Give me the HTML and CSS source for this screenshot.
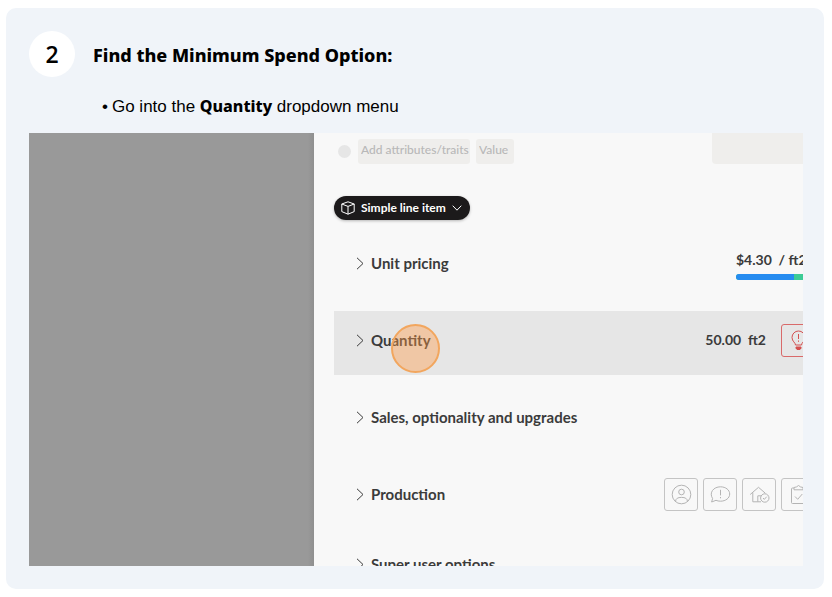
FILE: index.html
```html
<!DOCTYPE html>
<html lang="en">
<head>
<meta charset="utf-8">
<title>Find the Minimum Spend Option</title>
<meta name="viewport" content="width=device-width, initial-scale=1">
<link rel="stylesheet" href="styles.css">
</head>
<body>
<main class="step">
  <header class="step-head">
    <span class="step-number">2</span>
    <h2 class="step-title">Find the Minimum Spend Option:</h2>
  </header>
  <ul class="step-notes">
    <li>Go into the <strong>Quantity</strong> dropdown menu</li>
  </ul>
  <section class="shot">
    <div class="backdrop"></div>
    <div class="panel">
      <div class="attributes">
        <span class="dot"></span>
        <input class="field field-name" type="text" placeholder="Add attributes/traits" aria-label="Attribute name">
        <input class="field field-value" type="text" placeholder="Value" aria-label="Attribute value">
        <div class="field-blank"></div>
      </div>
      <button class="type-pill" type="button">
        <svg width="14" height="14" viewBox="0 0 14 14"><path d="M7 .8 13.2 3v7.6L7 13.2.8 10.600V3zM.8 3 7 5.400 13.200 3M7 5.400v7.800"/></svg>
        <span>Simple line item</span>
        <svg width="10" height="6" viewBox="0 0 10 6"><path d="M.7.7 5 5.200 9.300.7"/></svg>
      </button>
      <div class="rows">
        <div class="row">
          <button class="toggle" type="button"><svg class="chevron" width="8" height="13" viewBox="0 0 8 13"><path d="M1 .8 7 6.500 1 12.200"/></svg>Unit pricing</button>
          <div class="price">
            <span>$4.30 &nbsp;/ ft2</span>
            <div class="bar"><div class="bar-cost"></div></div>
          </div>
        </div>
        <div class="row row-active">
          <button class="toggle" type="button"><svg class="chevron" width="8" height="13" viewBox="0 0 8 13"><path d="M1 .8 7 6.500 1 12.200"/></svg>Quantity</button>
          <span class="amount">50.00 &nbsp;ft2</span>
          <button class="tool tool-alert" type="button" aria-label="Quantity hint">
            <svg width="21" height="21" viewBox="0 0 21 21"><path d="M7.500 15C7.500 12.500 4 11.500 4 7.500a6.500 6.500 0 0 1 13 0c0 4-3.500 5-3.500 7.500zM10.500 4v5M10.500 10.500v1.300"/><path d="M8 17h5v1.200l-1 1.300H9l-1-1.300z" fill="currentColor"/></svg>
          </button>
          <span class="click-mark"></span>
        </div>
        <div class="row">
          <button class="toggle" type="button"><svg class="chevron" width="8" height="13" viewBox="0 0 8 13"><path d="M1 .8 7 6.500 1 12.200"/></svg>Sales, optionality and upgrades</button>
        </div>
        <div class="row">
          <button class="toggle" type="button"><svg class="chevron" width="8" height="13" viewBox="0 0 8 13"><path d="M1 .8 7 6.500 1 12.200"/></svg>Production</button>
          <div class="tools">
            <button class="tool" type="button" aria-label="Assignee">
              <svg width="21" height="21" viewBox="0 0 21 21"><circle cx="10.500" cy="10.500" r="9.300"/><circle cx="10.500" cy="8" r="2.800"/><path d="M4.500 17.400c.3-3 2.300-4 6-4s5.700 1 6 4"/></svg>
            </button>
            <button class="tool" type="button" aria-label="Comment">
              <svg width="21" height="21" viewBox="0 0 21 21"><path d="M2.600 14.600C-1.200 8.500 3.600 2.800 10.500 2.800c5.200 0 9.200 3.200 9.200 7.200s-4 7.200-9.200 7.200c-1.700 0-3.200-.3-4.500-.9L1.600 18zM10.500 5.800v5.600M10.500 13v1.300"/></svg>
            </button>
            <button class="tool" type="button" aria-label="Site check">
              <svg width="21" height="21" viewBox="0 0 21 21"><path d="M1.200 10.500 9.500 3.300l6.800 5.900M3.800 8.500v9.300h5v-6h4M8.800 17.800h3.200"/><circle cx="15.800" cy="14" r="4.200"/><path d="m14 14 1.300 1.400 2.400-2.700"/></svg>
            </button>
            <button class="tool" type="button" aria-label="Checklist">
              <svg width="21" height="21" viewBox="0 0 21 21"><path d="M6 4H4.500Q3.500 4 3.500 5v13.500q0 1 1 1h12q1 0 1-1V5q0-1-1-1H15M6 5.800V3.500l2.500-.6q2-2.800 4 0l2.500.6v2.300zM7 12.500l2.700 2.800 4.600-5.300"/></svg>
            </button>
          </div>
        </div>
        <div class="row row-last">
          <button class="toggle" type="button"><svg class="chevron" width="8" height="13" viewBox="0 0 8 13"><path d="M1 .8 7 6.500 1 12.200"/></svg>Super user options</button>
        </div>
      </div>
    </div>
  </section>
</main>
</body>
</html>
```
FILE: styles.css
```css
* {
  box-sizing: border-box;
}

body {
  margin: 8px 8px 8px 6px;
  background: #fff;
  color: #000;
  font-family: "Liberation Sans", Arial, sans-serif;
}

button,
input {
  margin: 0;
  border: 0;
  font: inherit;
  color: inherit;
}

svg {
  display: block;
  flex: none;
  fill: none;
  stroke: currentColor;
  stroke-width: 1;
}

.step {
  padding: 23px 21px 23px 23px;
  border-radius: 10px;
  background: #f0f4f9;
}

.step-head {
  display: flex;
  align-items: center;
  gap: 18px;
}

.step-number {
  display: grid;
  place-items: center;
  width: 46px;
  height: 46px;
  border-radius: 50%;
  background: #fff;
  font: 600 23px/46px "Open Sans", sans-serif;
}

.step-title {
  margin: 0;
  padding-top: 2px;
  font: 800 18px/28px "Noto Sans", sans-serif;
}

.step-notes {
  margin: 16px 0 14px;
  padding: 0 0 0 73px;
  list-style: none;
  font-size: 17px;
  line-height: 26px;
}

.step-notes li {
  height: 26px;
}

.step-notes li::before {
  content: "•";
  margin-right: 4px;
}

.step-notes strong {
  font: 800 16px/26px "Noto Sans", sans-serif;
}

.shot {
  display: grid;
  grid-template-columns: 285px minmax(0, 1fr);
  aspect-ratio: 774 / 433;
  overflow: hidden;
  background: #f8f8f8;
  color: #3b3b3b;
  font: 700 15px/20px Lato, sans-serif;
}

.backdrop {
  background: linear-gradient(to left, #8f8f8f, #999 6px);
}

.panel {
  min-height: 0;
  margin-right: -12px;
  padding-left: 20px;
}

.attributes {
  display: flex;
  align-items: flex-end;
  gap: 6px;
  height: 31px;
}

.dot {
  width: 13px;
  height: 13px;
  margin: 0 1px 6px 4px;
  border-radius: 50%;
  background: #e6e6e6;
}

.field {
  height: 25px;
  padding: 0 0 4px 3px;
  border-radius: 3px;
  background: #efeeec;
  font-size: 12px;
  font-weight: 500;
}

.field::placeholder {
  color: #b8b8b8;
  opacity: 1;
}

.field-name {
  width: 112px;
}

.field-value {
  width: 38px;
}

.field-blank {
  align-self: stretch;
  width: 103px;
  margin-left: auto;
  border-radius: 0 0 4px 4px;
  background: #efeeec;
}

.type-pill {
  display: flex;
  align-items: center;
  gap: 6px;
  height: 24px;
  margin-top: 32px;
  padding: 0 8px 0 7px;
  border-radius: 12px;
  background: #1c1a1b;
  box-shadow: 0 1px 3px #0004;
  color: #fff;
  font-size: 12px;
}

.rows {
  display: grid;
  gap: 13px;
  margin-top: 14px;
}

.row {
  position: relative;
  display: flex;
  align-items: center;
  height: 64px;
  padding: 0 0 6px 22px;
}

.row-active {
  background: #e6e6e6;
}

.row-last {
  height: 50px;
}

.toggle {
  display: flex;
  align-items: center;
  gap: 7px;
  margin-right: auto;
  padding: 0;
  background: none;
}

.price {
  display: grid;
  gap: 4px;
  width: 79px;
  padding-top: 3px;
  font-size: 14px;
  white-space: nowrap;
}

.bar {
  height: 6px;
  border-radius: 3px;
  overflow: hidden;
  background: #3ccb96;
}

.bar-cost {
  width: 74%;
  height: 100%;
  background: #268cf0;
}

.amount {
  margin-right: 15px;
  font-size: 14px;
}

.tools {
  display: flex;
  gap: 5px;
}

.tool {
  display: grid;
  place-items: center;
  width: 34px;
  height: 33px;
  padding: 0;
  border: 1px solid #c4c4c4;
  border-radius: 3px;
  background: none;
  color: #b4b4b4;
}

.tool-alert {
  border-color: #d96a6a;
  color: #d45050;
}

.click-mark {
  position: absolute;
  top: 13px;
  left: 57px;
  width: 49px;
  height: 49px;
  border: 2px solid #f2a65e;
  border-radius: 50%;
  background: #ff984466;
  pointer-events: none;
}
```
